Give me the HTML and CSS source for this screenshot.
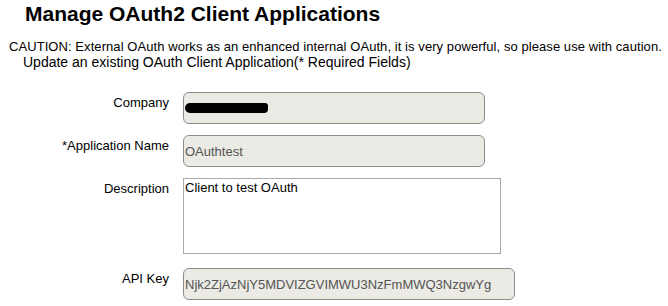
FILE: index.html
```html
<!doctype html>
<html lang="en">
    <head>
        <meta charset="UTF-8" />
        <title>Manage OAuth2 Client Applications</title>
        <link rel="stylesheet" href="styles.css">
    </head>
    <body>
        <h1 class="page-title">Manage OAuth2 Client Applications</h1>
        <p class="caution">CAUTION: External OAuth works as an enhanced internal OAuth, it is very powerful, so please use with caution.</p>
        <p class="subtitle">Update an existing OAuth Client Application(* Required Fields)</p>
        <form class="client-form">
            <label class="form-label">Company</label>
            <div class="form-field field-company"><span class="redacted"></span></div>

            <label class="form-label" for="appName">*Application Name</label>
            <input id="appName" class="form-field field-name" type="text" value="OAuthtest" readonly />

            <label class="form-label" for="desc">Description</label>
            <textarea id="desc" class="form-textarea">Client to test OAuth</textarea>

            <label class="form-label row-api" for="apiKey">API Key</label>
            <input id="apiKey" class="form-field field-api row-api" type="text" value="Njk2ZjAzNjY5MDVIZGVIMWU3NzFmMWQ3NzgwYg" readonly />
        </form>
    </body>
</html>
```

FILE: styles.css
```css
* {
    box-sizing: border-box;
}

body {
    margin: 0;
    font-family: "Liberation Sans", Arial, sans-serif;
    font-size: 13px;
    color: #000;
    background: #fff;
}

.page-title {
    margin: 2px 0 0 25px;
    font-size: 21px;
    line-height: 24px;
    font-weight: 700;
}

.caution {
    margin: 13px 0 0 9px;
    line-height: 15px;
    letter-spacing: 0.07px;
}

.subtitle {
    margin: 0 0 0 23px;
    font-size: 14px;
    line-height: 16px;
}

.client-form {
    display: grid;
    grid-template-columns: 169px auto;
    column-gap: 14px;
    row-gap: 11px;
    justify-items: start;
    margin-top: 22px;
}

.form-label {
    justify-self: end;
    padding-top: 3px;
    line-height: 15px;
}

.form-field {
    height: 32px;
    padding: 0 1px;
    border: 1px solid #8c8c8c;
    border-radius: 6px;
    background: #ebeae4;
    font-family: "Liberation Sans", Arial, sans-serif;
    font-size: 13px;
    color: #555;
    outline: none;
}

.field-company,
.field-name {
    width: 302px;
}

.field-company {
    display: flex;
    align-items: center;
}

.redacted {
    display: inline-block;
    width: 83px;
    height: 10px;
    margin-left: 0;
    background: #000;
    border-radius: 5px 3px 4px 5px;
}

.form-textarea {
    width: 318px;
    height: 76px;
    padding: 1px 1px;
    border: 1px solid #a9a9a9;
    font-family: "Liberation Sans", Arial, sans-serif;
    font-size: 13px;
    line-height: 15px;
    color: #000;
    resize: none;
    outline: none;
}

.field-api {
    width: 332px;
}

.row-api {
    margin-top: 3px;
}
```
